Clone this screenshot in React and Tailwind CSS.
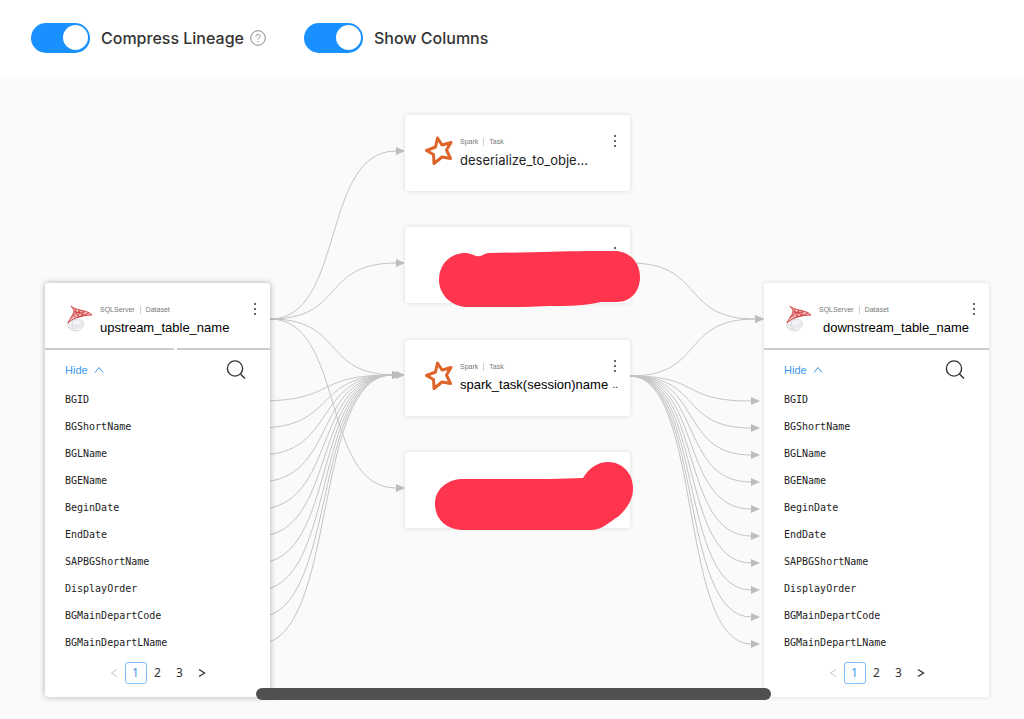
import React, { useState } from "react";

const COLUMNS = [
  "BGID",
  "BGShortName",
  "BGLName",
  "BGEName",
  "BeginDate",
  "EndDate",
  "SAPBGShortName",
  "DisplayOrder",
  "BGMainDepartCode",
  "BGMainDepartLName",
];

// Edge coordinates are relative to the canvas: [x1, y1, x2, y2].
const NODE_EDGES = [
  [270, 242, 405, 74],
  [270, 242, 405, 186],
  [270, 242, 405, 298],
  [270, 242, 405, 411],
  [630, 186, 764, 242],
  [630, 299, 764, 242],
];

const COLUMN_EDGES = COLUMNS.flatMap((_, i) => [
  [258, 324 + i * 27, 401, 298],
  [630, 299, 760, 324 + i * 27],
]);

function Edge({ points }) {
  const [x1, y1, x2, y2] = points;
  const end = x2 - 9;
  const reach = (end - x1) * 0.6;
  return (
    <g>
      <path
        d={`M${x1} ${y1}C${x1 + reach} ${y1} ${end - reach} ${y2} ${end} ${y2}`}
        fill="none"
        stroke="#c4c4c4"
        strokeWidth="1"
      />
      <path d={`M${x2} ${y2}l-9 -4v8z`} fill="#bdbdbd" />
    </g>
  );
}

function Toggle({ label, checked, onChange }) {
  return (
    <label className="flex cursor-pointer items-center gap-[11px]">
      <input type="checkbox" role="switch" className="peer sr-only" checked={checked} onChange={onChange} />
      <span className="flex h-[30px] w-[59px] items-center rounded-full bg-[#bfbfbf] p-[2px] peer-checked:justify-end peer-checked:bg-[#1890ff]">
        <span className="size-[25px] rounded-full bg-white" />
      </span>
      <span>{label}</span>
    </label>
  );
}

function SqlServerIcon() {
  return (
    <svg viewBox="0 0 28 30" className="h-[30px] w-7 shrink-0" fill="none" aria-hidden="true">
      <g stroke="#d3d6da" strokeWidth="0.8">
        <path d="M3 18C6 15 15 15 18 17C20 21 16 27 11 27C5 27 1 23 3 18Z" fill="#f3f4f5" />
        <path d="M3 20C7 23 14 22 18 18M3 23C8 26 14 24 18 20M8 16C6 20 8 25 12 27" />
      </g>
      <path d="M6 2C8 4 11 5 15 6C20 7 24 8 27 11C22 11 16 12 11 14C8 15 5 17 3 19C5 14 8 11 9 8C9 5 7 4 6 2Z" fill="#f4c6c6" stroke="#d34545" strokeWidth="1" />
      <path d="M9 7L19 11M10 5L13 13M15 6L13 13L24 9M9 9L20 8M6 14L15 6M8 10L11 14M18 7L17 12" stroke="#d34545" strokeWidth="0.9" />
    </svg>
  );
}

function SparkIcon() {
  return (
    <svg viewBox="0 0 28 30" className="h-[30px] w-7 shrink-0" fill="none" aria-hidden="true">
      <path
        d="M12.5 2L17 9L26 6.5L21.5 14L25.5 22.5L17 21L9 27.5L8.5 18.5L1.5 14.5L10.5 11Z"
        stroke="#df6429"
        strokeWidth="3"
        strokeLinejoin="round"
      />
    </svg>
  );
}

function MenuButton() {
  return (
    <button type="button" aria-label="More actions" className="absolute top-5 right-[13px] flex h-3 w-1 flex-col items-center justify-between">
      <span className="size-[2px] rounded-full bg-[#333]" />
      <span className="size-[2px] rounded-full bg-[#333]" />
      <span className="size-[2px] rounded-full bg-[#333]" />
    </button>
  );
}

function NodeHeader({ icon, platform, kind, children }) {
  return (
    <div className="flex items-start gap-[7px] pt-[21px] pl-5">
      {icon}
      <div className="min-w-0 flex-1 whitespace-nowrap">
        <div className="flex h-3 items-center gap-[5px] font-['Liberation_Sans'] text-[7px] text-[#777]">
          <span>{platform}</span>
          <span className="h-2 w-px bg-[#d0d0d0]" />
          <span>{kind}</span>
        </div>
        {children}
      </div>
    </div>
  );
}

function TaskNode({ className, title, children }) {
  return (
    <section className={`absolute left-[405px] h-[76px] w-[225px] rounded-[3px] bg-white shadow-[0_0_5px_rgba(0,0,0,0.12)] ${className}`}>
      <MenuButton />
      {title && (
        <NodeHeader icon={<SparkIcon />} platform="Spark" kind="Task">
          {title}
        </NodeHeader>
      )}
      {children}
    </section>
  );
}

function Pager() {
  return (
    <nav aria-label="Column pages" className="flex items-center justify-center pt-[6px] font-['Noto_Sans'] text-xs text-[#333]">
      <button type="button" disabled aria-label="Previous page" className="flex w-[22px] justify-center text-[#c8c8c8]">
        <svg viewBox="0 0 8 10" className="h-[10px] w-2" fill="none" stroke="currentColor" aria-hidden="true">
          <path d="M7 1.5L1.5 5L7 8.5" />
        </svg>
      </button>
      <button type="button" aria-current="page" className="h-[22px] w-[22px] rounded-[3px] border border-[#7dbdf5] text-[#3b98ea]">1</button>
      <button type="button" className="w-[22px]">2</button>
      <button type="button" className="w-[22px]">3</button>
      <button type="button" aria-label="Next page" className="flex w-[22px] justify-center">
        <svg viewBox="0 0 8 10" className="h-[10px] w-2" fill="none" stroke="currentColor" strokeWidth="1.3" aria-hidden="true">
          <path d="M1 1.5L6.5 5L1 8.5" />
        </svg>
      </button>
    </nav>
  );
}

function DatasetNode({ className, name, nameClass, children }) {
  return (
    <section className={`absolute top-[206px] h-[414px] w-[225px] rounded-[3px] bg-white ${className}`}>
      <MenuButton />
      <div className="h-[67px] border-b-2 border-[#cbcbcb]">
        <NodeHeader icon={<SqlServerIcon />} platform="SQLServer" kind="Dataset">
          <h2 className={`h-6 font-['Liberation_Sans'] text-[13px] leading-6 text-black ${nameClass}`}>{name}</h2>
        </NodeHeader>
      </div>
      {children}
      <div className="flex items-center justify-between pt-[10px] pr-6 pl-5">
        <button type="button" className="flex items-center gap-[6px] font-['Liberation_Sans'] text-[11px] text-[#3b98ea]">
          Hide
          <svg viewBox="0 0 10 8" className="h-2 w-[10px]" fill="none" stroke="currentColor" aria-hidden="true">
            <path d="M1 6.5L5 1.5L9 6.5" />
          </svg>
        </button>
        <button type="button" aria-label="Search columns">
          <svg viewBox="0 0 20 20" className="size-5" fill="none" stroke="#333" strokeWidth="1.4" aria-hidden="true">
            <circle cx="9" cy="8.5" r="7.6" />
            <path d="M14.5 14L19 18.5" />
          </svg>
        </button>
      </div>
      <ul className="pt-[6px] pl-5 font-['DejaVu_Sans_Mono'] text-[10px] leading-[27px] text-[#222]">
        {COLUMNS.map((c) => (
          <li key={c}>{c}</li>
        ))}
      </ul>
      <Pager />
    </section>
  );
}

export default function App() {
  const [compress, setCompress] = useState(true);
  const [showColumns, setShowColumns] = useState(true);
  return (
    <div className="flex min-h-screen flex-col bg-white font-['Inter',sans-serif]">
      <header className="flex h-[77px] items-center gap-[38px] px-[31px] pb-[2px] text-base font-medium text-[#333]">
        <div className="flex items-center gap-[6px]">
          <Toggle label="Compress Lineage" checked={compress} onChange={() => setCompress(!compress)} />
          <button type="button" aria-label="About compressed lineage">
            <svg viewBox="0 0 16 16" className="size-4" fill="none" stroke="#8c8c8c" aria-hidden="true">
              <circle cx="8" cy="8" r="7.3" />
              <path d="M5.9 6.5C5.9 3.7 10.1 3.8 10.1 6.3C10.1 7.9 8 7.8 8 9.5M8 11V12.2" />
            </svg>
          </button>
        </div>
        <Toggle label="Show Columns" checked={showColumns} onChange={() => setShowColumns(!showColumns)} />
      </header>

      <main className="relative min-h-[642px] flex-1 overflow-hidden bg-[#fafafa]">
        <svg className="absolute inset-0 size-full" aria-hidden="true">
          {[...NODE_EDGES, ...COLUMN_EDGES].map((points) => (
            <Edge key={points.join()} points={points} />
          ))}
        </svg>

        <DatasetNode className="left-[45px] shadow-[0_0_6px_rgba(0,0,0,0.3)]" name="upstream_table_name" nameClass="">
          <span className="absolute top-[65px] left-[129px] h-[2px] w-[3px] bg-white" />
        </DatasetNode>

        <TaskNode
          className="top-[38px]"
          title={<h2 className="h-6 text-[13px] leading-6 text-[#222]">deserialize_to_obje...</h2>}
        />
        <TaskNode className="top-[150px]">
          <svg viewBox="0 0 202 58" className="absolute top-6 left-[34px] h-[58px] w-[202px]" aria-hidden="true">
            <path
              d="M25 2C31 2 34 4 37 5C43 6 44 3 49 2L105 1C125 0 150 0 178 0C193 2 201 13 201 26C201 40 192 51 178 51L162 51C145 55 130 55 110 55L85 56L26 56C10 54 0 42 0 29C0 14 10 3 25 2Z"
              fill="#ff344d"
            />
          </svg>
        </TaskNode>
        <TaskNode
          className="top-[263px]"
          title={
            <h2 className="flex h-6 justify-between pr-3 font-['Liberation_Sans'] text-[13px] leading-6 text-black">
              <span>spark_task(session)name</span>
              <span className="text-[10px] leading-6">..</span>
            </h2>
          }
        />
        <TaskNode className="top-[375px]">
          <svg viewBox="0 0 200 70" className="absolute top-[10px] left-[30px] h-[70px] w-[200px]" aria-hidden="true">
            <path
              d="M26 17L115 17L148 16C154 6 163 0 173 0C187 0 198 11 198 26C198 39 191 47 184 54C174 60 168 68 155 68L26 68C11 67 0 57 0 42C0 28 11 18 26 17Z"
              fill="#ff344d"
            />
          </svg>
        </TaskNode>

        <DatasetNode
          className="left-[764px] shadow-[0_0_5px_rgba(0,0,0,0.12)]"
          name="downstream_table_name"
          nameClass="pl-1"
        />

        <div className="absolute bottom-[19px] left-1/4 h-3 w-[515px] rounded-full bg-[#505050]" />
      </main>
    </div>
  );
}
